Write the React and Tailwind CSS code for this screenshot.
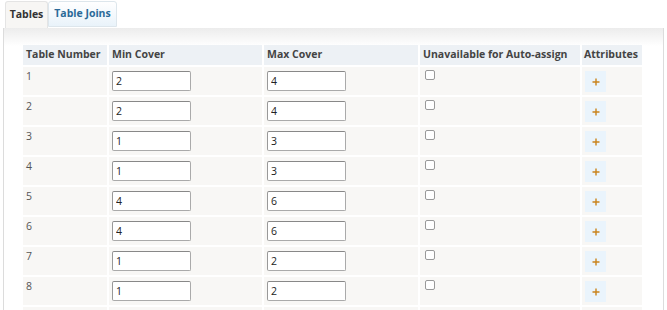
import React from 'react'

const rows = [
  { n: 1, min: 2, max: 4 },
  { n: 2, min: 2, max: 4 },
  { n: 3, min: 1, max: 3 },
  { n: 4, min: 1, max: 3 },
  { n: 5, min: 4, max: 6 },
  { n: 6, min: 4, max: 6 },
  { n: 7, min: 1, max: 2 },
  { n: 8, min: 1, max: 2 },
  { n: 9, min: 1, max: 2 },
]

const font = { fontFamily: '"Open Sans", "DejaVu Sans", sans-serif' }

function CoverInput({ value }) {
  return (
    <input
      defaultValue={value}
      className="block w-[79px] h-[20px] px-[3px] text-[10.5px] text-[#222] bg-white border border-[#aaa] border-t-[#888] border-l-[#999] rounded-[2px] outline-none"
    />
  )
}

export default function App() {
  return (
    <div className="w-[667px] h-[310px] overflow-hidden bg-white" style={font}>
      {/* tabs */}
      <div className="flex pl-[5px] pt-[1px]">
        <div className="w-[43px] h-[27px] flex items-center justify-center text-[10.5px] font-bold text-[#333] bg-[#f7f6f4] border border-[#e4e4e4] border-b-0 rounded-t-[3px]">
          Tables
        </div>
        <div className="w-[69px] h-[26px] flex items-center justify-center text-[10.5px] font-bold text-[#2b6a98] bg-gradient-to-b from-white to-[#e9f3fa] border border-[#dde6ec] rounded-t-[3px]">
          Table Joins
        </div>
      </div>

      {/* panel */}
      <div className="ml-[3px] mr-[3px] h-full border-l border-r border-[#dcdcdc] bg-gradient-to-b from-[#ececec] via-white via-[18px] to-white pt-[15px] pl-[17px]">
        <table className="table-fixed w-[623px] border-separate border-spacing-[2px] text-[10.5px] whitespace-nowrap">
          <colgroup>
            <col className="w-[84px]" />
            <col className="w-[153px]" />
            <col className="w-[154px]" />
            <col className="w-[160px]" />
            <col className="w-[60px]" />
          </colgroup>
          <thead>
            <tr className="text-left text-[#444] font-bold">
              <th className="h-[20px] px-[3px] bg-[#edf1f5]">Table Number</th>
              <th className="px-[3px] bg-[#edf1f5]">Min Cover</th>
              <th className="px-[3px] bg-[#edf1f5]">Max Cover</th>
              <th className="px-[3px] bg-[#edf1f5]">Unavailable for Auto-assign</th>
              <th className="px-[2px] bg-[#edf1f5]">Attributes</th>
            </tr>
          </thead>
          <tbody>
            {rows.map(r => (
              <tr key={r.n} className="align-top text-[#555]">
                <td className="h-[28px] px-[3px] pt-[2px] bg-[#f8f7f5] leading-[14px]">{r.n}</td>
                <td className="px-[3px] pt-[4px] bg-[#f8f7f5]"><CoverInput value={r.min} /></td>
                <td className="px-[3px] pt-[4px] bg-[#f8f7f5]"><CoverInput value={r.max} /></td>
                <td className="px-[5px] pt-[3px] bg-[#f8f7f5]">
                  <span className="block w-[10px] h-[10px] bg-white border border-[#999] rounded-[2px]" />
                </td>
                <td className="px-[3px] pt-[4px] bg-[#f8f7f5]">
                  <button className="w-[21px] h-[21px] flex items-center justify-center bg-[#eaf4fc]">
                    <svg width="8" height="8" viewBox="0 0 8 8">
                      <path d="M4 0.5V7.5M0.5 4H7.5" stroke="#c9831c" strokeWidth="1.4" />
                    </svg>
                  </button>
                </td>
              </tr>
            ))}
          </tbody>
        </table>
      </div>
    </div>
  )
}
